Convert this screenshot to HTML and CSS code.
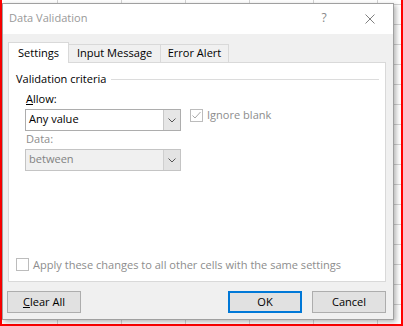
FILE: index.html
```html
<!DOCTYPE html>
<html lang="en">
  <head>
    <meta charset="UTF-8" />
    <title>Data Validation</title>
    <link rel="stylesheet" href="styles.css">
  </head>
  <body>
    <div id="screen">
      <div id="dialog">
        <div id="titlebar">
          <span class="title">Data Validation</span>
          <span class="caption-btn help">?</span>
          <span class="caption-btn close">
            <svg width="10" height="10" viewBox="0 0 10 10">
              <path d="M0.5 0.5 L9.5 9.5 M9.5 0.5 L0.5 9.5" stroke="#808080" stroke-width="1" fill="none" />
            </svg>
          </span>
        </div>
        <div id="content">
          <div class="tabs">
            <div class="tab active">Settings</div>
            <div class="tab input-tab">Input Message</div>
            <div class="tab error-tab">Error Alert</div>
          </div>
          <div class="panel">
            <div class="group-title">Validation criteria<span class="rule"></span></div>
            <div class="criteria">
              <div class="fields">
                <label class="field-label"><u>A</u>llow:</label>
                <div class="combo">
                  <span class="combo-value">Any value</span>
                  <span class="combo-arrow">
                    <svg width="8" height="5" viewBox="0 0 8 5">
                      <path d="M0.5 0.5 L4 4 L7.5 0.5" stroke="#555" stroke-width="1" fill="none" />
                    </svg>
                  </span>
                </div>
                <label class="field-label disabled">Data:</label>
                <div class="combo disabled">
                  <span class="combo-value">between</span>
                  <span class="combo-arrow">
                    <svg width="8" height="5" viewBox="0 0 8 5">
                      <path d="M0.5 0.5 L4 4 L7.5 0.5" stroke="#555" stroke-width="1" fill="none" />
                    </svg>
                  </span>
                </div>
              </div>
              <label class="check blank">
                <span class="box">
                  <svg width="11" height="11" viewBox="0 0 11 11">
                    <path d="M1.5 5.5 L4 8 L9.5 2" stroke="#a8a8a8" stroke-width="1" fill="none" />
                  </svg>
                </span>
                Ignore blank
              </label>
            </div>
            <label class="check apply">
              <span class="box"></span>
              Apply these changes to all other cells with the same settings
            </label>
          </div>
          <div id="buttons">
            <button type="button" class="clear"><u>C</u>lear All</button>
            <button type="button" class="default">OK</button>
            <button type="button">Cancel</button>
          </div>
        </div>
      </div>
    </div>
  </body>
</html>
```

FILE: styles.css
```css
* {
  box-sizing: border-box;
  padding: 0;
  margin: 0;
}

body {
  font-family: "Open Sans", sans-serif;
  font-size: 11.05px;
  line-height: 16px;
  color: #000;
}

#screen {
  width: 403px;
  height: 326px;
  padding-top: 3px;
  border-left: 2px solid #f00;
  border-right: 2px solid #f00;
  border-bottom: 2px solid #f00;
  background-color: #fff;
  background-image: linear-gradient(#d4d4d4 1px, transparent 1px),
    linear-gradient(90deg, #d4d4d4 1px, transparent 1px);
  background-size: 64px 20px;
  background-position: 55px 4px;
}

#dialog {
  width: 392px;
  height: 317px;
  border: 1px solid #a0a0a0;
  background: #f0f0f0;
  box-shadow: 2px 2px 5px rgba(0, 0, 0, 0.3);
  display: flex;
  flex-direction: column;
}

#titlebar {
  height: 30px;
  padding: 0 0 2px 6px;
  background: #fff;
  color: #999;
  display: flex;
  align-items: center;
}

.title {
  flex: 1;
}

.caption-btn {
  width: 46px;
  display: flex;
  justify-content: center;
  align-items: center;
}

.help {
  color: #888;
  font-size: 12px;
}

.close svg {
  margin-top: 2px;
}

#content {
  flex: 1;
  padding: 8px 7px 0 5px;
  display: flex;
  flex-direction: column;
}

.tabs {
  display: flex;
  align-items: flex-end;
}

.tab {
  height: 18px;
  border: 1px solid #d9d9d9;
  border-left: 0;
  border-bottom: 0;
  background: #f0f0f0;
  text-align: center;
}

.tab.active {
  width: 61px;
  height: 21px;
  margin-bottom: -1px;
  padding-top: 2px;
  border-left: 1px solid #d9d9d9;
  background: #fff;
  position: relative;
  z-index: 1;
}

.input-tab {
  width: 92px;
}

.error-tab {
  width: 68px;
}

.panel {
  height: 220px;
  border: 1px solid #d9d9d9;
  background: #fff;
  padding: 8px 6px 8px 7px;
  display: flex;
  flex-direction: column;
}

.group-title {
  display: flex;
  align-items: center;
}

.rule {
  flex: 1;
  height: 1px;
  margin-left: 5px;
  background: #dcdcdc;
}

.criteria {
  display: flex;
  align-items: flex-start;
  margin: 4px 0 0 9px;
}

.fields {
  width: 156px;
}

.field-label {
  display: block;
  padding-left: 1px;
}

.field-label.disabled {
  color: #8d8d8d;
}

.combo {
  height: 22px;
  margin-top: 2px;
  border: 1px solid #adadad;
  background: #fff;
  display: flex;
}

.combo-value {
  flex: 1;
  padding-left: 3px;
  line-height: 18px;
}

.combo-arrow {
  width: 17px;
  border-left: 1px solid #c8c8c8;
  background: #e6e6e6;
  display: flex;
  justify-content: center;
  align-items: center;
}

.combo.disabled {
  border-color: #c4c4c4;
  background: #f0f0f0;
  color: #838383;
}

.combo.disabled .combo-arrow {
  border-left-color: #cfcfcf;
  background: #e3e3e3;
}

.check {
  display: flex;
  align-items: flex-start;
  gap: 4px;
  color: #8d8d8d;
}

.box {
  width: 13px;
  height: 13px;
  margin-top: 2px;
  border: 1px solid #bcbcbc;
  background: #fff;
  display: flex;
}

.blank {
  margin: 16px 0 0 9px;
}

.apply {
  margin-top: auto;
}

.apply .box {
  margin-top: 1px;
}

#buttons {
  display: flex;
  gap: 10px;
  margin-top: 9px;
}

button {
  width: 74px;
  height: 22px;
  border: 1px solid #adadad;
  background: #e1e1e1;
  font: inherit;
  color: #000;
}

button.clear {
  margin-left: -1px;
  margin-right: auto;
}

button.default {
  border: 2px solid #0078d7;
}
```
